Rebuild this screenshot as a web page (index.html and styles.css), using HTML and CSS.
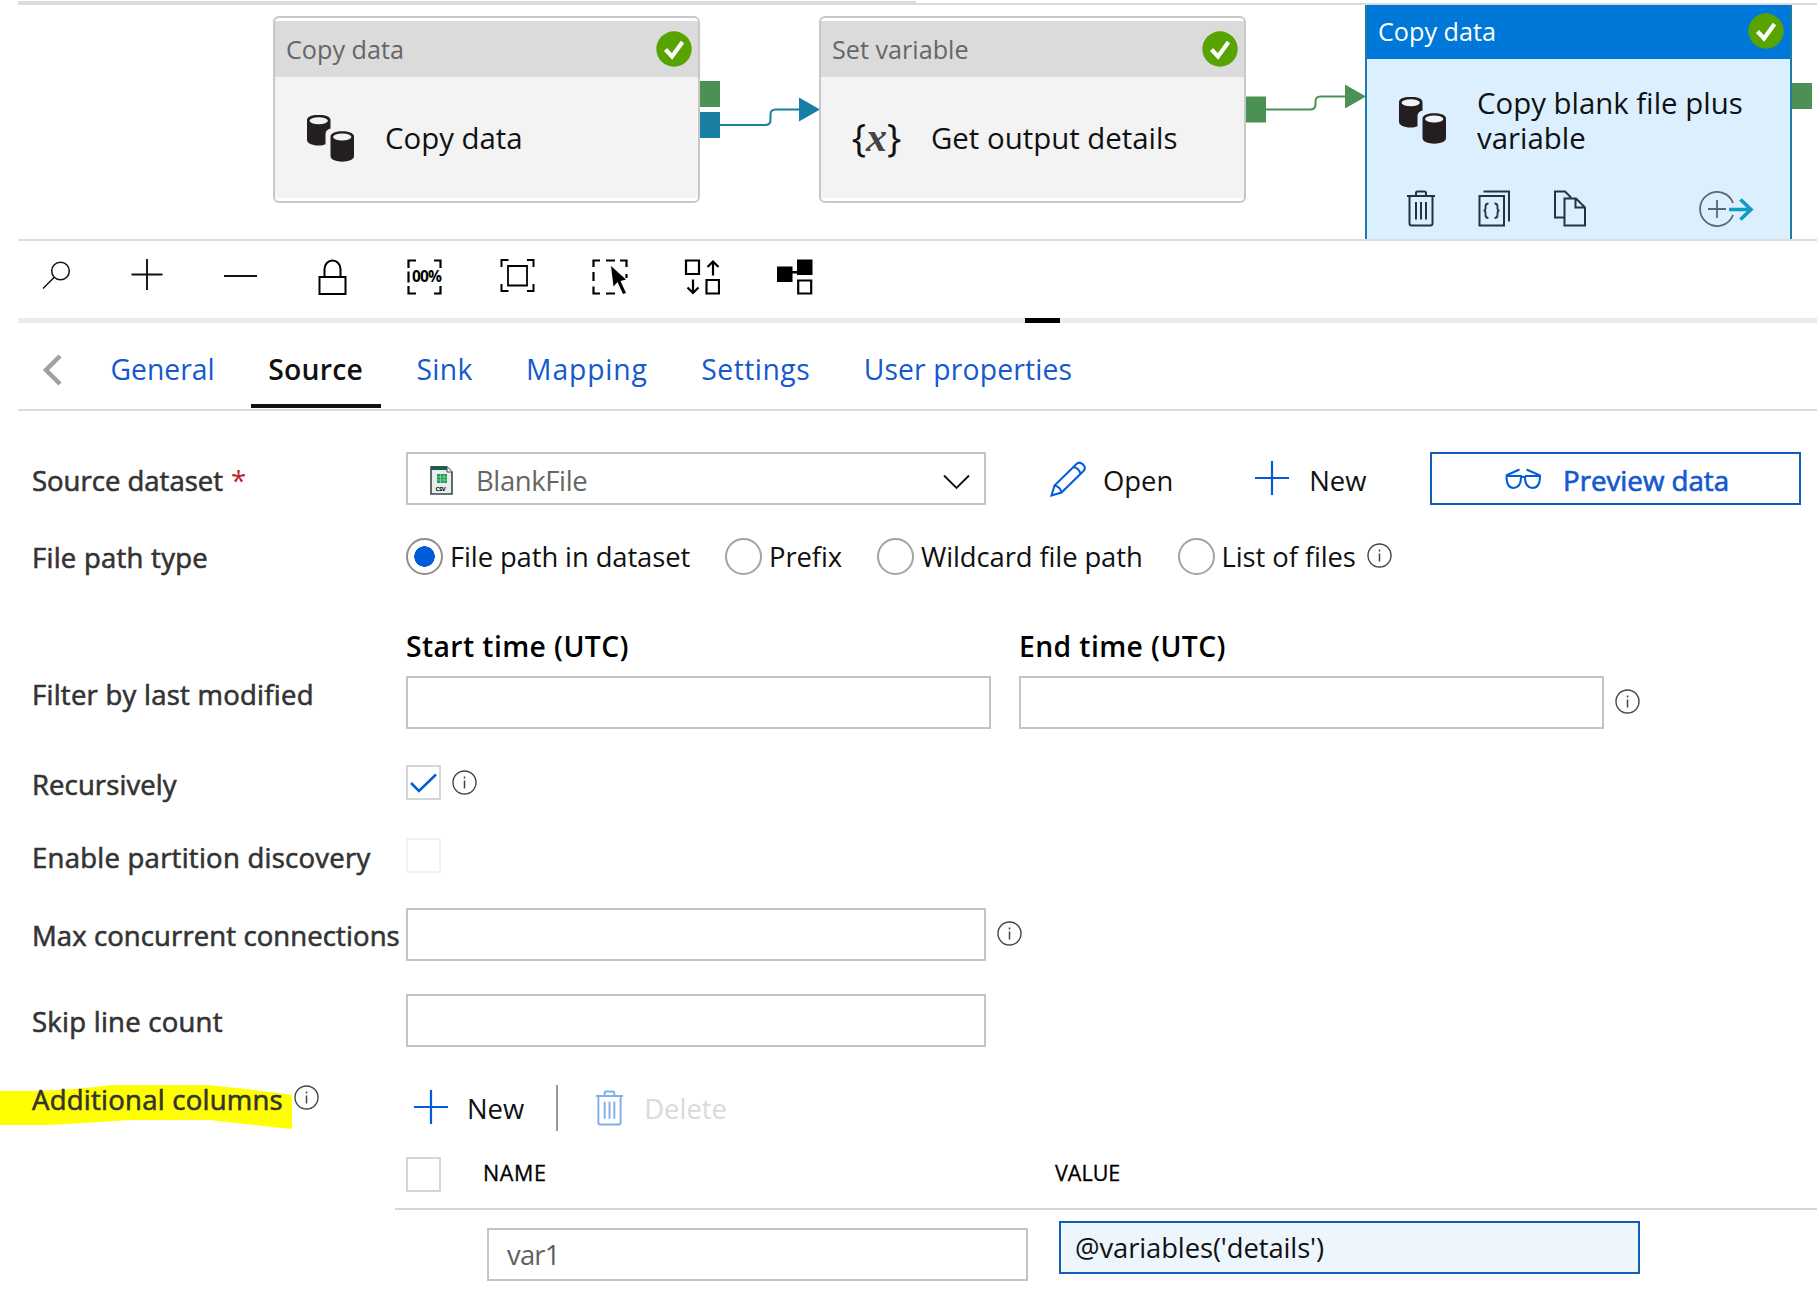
FILE: index.html
```html
<!DOCTYPE html>
<html lang="en">
<head>
    <meta charset="UTF-8">
    <meta name="viewport" content="width=device-width, initial-scale=1.0">
    <title>Pipeline - Copy blank file plus variable</title>
    <link rel="stylesheet" href="styles.css">
</head>
<body>
    <svg class="symbols" aria-hidden="true">
        <symbol id="check" viewBox="0 0 36 36">
            <circle cx="18" cy="18" r="17.7" fill="#57a300"/>
            <path d="M9.500 18.500l6.500 7L26.500 11" fill="none" stroke="#fff" stroke-width="4.200"/>
        </symbol>
        <symbol id="cylinders" viewBox="0 0 47 47">
            <path d="M0 5v20c0 3 5 5.500 11.500 5.500 3 0 5-.4 7-1.200V19c0-3 2-4.500 5-5.500V5c0-7-23.500-7-23.500 0z" fill="#231f20"/>
            <ellipse cx="11.700" cy="5.800" rx="9.200" ry="3.500" fill="#f3f3f3"/>
            <path d="M23.500 21.500v19.500c0 7.500 23.500 7.500 23.500 0V21.500c0-7-23.500-7-23.500 0z" fill="#231f20"/>
            <ellipse cx="35.200" cy="22" rx="9.200" ry="3.500" fill="#f3f3f3"/>
        </symbol>
        <symbol id="trash" viewBox="0 0 30 37">
            <path d="M1 6h28M10 5.500V3q0-1.500 1.500-1.500h7Q20 1.500 20 3v2.500M3.500 6v27.500q0 2 2 2h19q2 0 2-2V6M10 12v17.500M15 12v17.500M20 12v17.500" fill="none" stroke="currentColor" stroke-width="2"/>
        </symbol>
        <symbol id="info" viewBox="0 0 25 25">
            <circle cx="12.500" cy="12.500" r="11.500" fill="none" stroke="#444" stroke-width="1.400"/>
            <path d="M12.500 10.500v8M12.500 6.500v2" stroke="#444" stroke-width="1.500"/>
        </symbol>
        <symbol id="plus" viewBox="0 0 34 34">
            <path d="M17 0v34M0 17h34" stroke="#015cda" stroke-width="2.200"/>
        </symbol>
    </svg>

    <div class="canvas">
        <div class="canvas-scroll"></div>
        <svg class="links" width="1817" height="240">
            <path d="M720 125h45q5.500 0 5.500-5v-5.500q0-5 5-5H800" fill="none" stroke="#1b7fa3" stroke-width="2"/>
            <path d="M799 97.500l21 12-21 12z" fill="#1b7fa3"/>
            <path d="M1266 109.500h44q5.500 0 5.500-5v-3q0-5 5-5H1346" fill="none" stroke="#4a9153" stroke-width="2"/>
            <path d="M1345 84.500l21 12-21 12z" fill="#4a9153"/>
            <path d="M700 81h20v26h-20zM1246 96.500h20v26h-20zM1792 83h20v26h-20z" fill="#4a9153"/>
            <path d="M700 112h20v26h-20z" fill="#1b7fa3"/>
        </svg>

        <div class="node node-copy">
            <div class="node-head"><span>Copy data</span><svg class="status"><use href="#check"/></svg></div>
            <div class="node-body">
                <svg class="node-icon"><use href="#cylinders"/></svg>
                <span class="node-title">Copy data</span>
            </div>
        </div>

        <div class="node node-variable">
            <div class="node-head"><span>Set variable</span><svg class="status"><use href="#check"/></svg></div>
            <div class="node-body">
                <span class="node-icon var-icon">{<i>x</i>}</span>
                <span class="node-title">Get output details</span>
            </div>
        </div>

        <div class="node node-selected">
            <div class="node-head"><span>Copy data</span><svg class="status"><use href="#check"/></svg></div>
            <div class="node-body">
                <svg class="node-icon"><use href="#cylinders"/></svg>
                <span class="node-title">Copy blank file plus variable</span>
            </div>
            <div class="node-actions">
                <svg width="30" height="37"><use href="#trash"/></svg>
                <svg width="33" height="37" viewBox="0 0 33 37" fill="none" stroke="currentColor" stroke-width="2">
                    <path d="M1.500 6h24.500v29.500H1.500zM5.500 1.500h25.500V31.500"/>
                    <path d="M10.500 13.500q-3 0-3 3v2q0 2.200-2 2.200 2 0 2 2.200v2q0 3 3 3M16.500 13.500q3 0 3 3v2q0 2.200 2 2.200-2 0-2 2.200v2q0 3-3 3" stroke-width="1.800"/>
                </svg>
                <svg width="34" height="37" viewBox="0 0 34 37" fill="none" stroke="currentColor" stroke-width="2">
                    <path d="M11.500 27.500H2v-26h10l6 6M11.500 8.500h11.500l9 9v18H11.500zM22.500 8.500V17.500H32"/>
                </svg>
                <svg class="add-output" width="55" height="38" viewBox="0 0 55 38" fill="none">
                    <path d="M34 13A17 17 0 1 0 34 25M18 10v18M9 19h18" stroke="#5a6672" stroke-width="1.800"/>
                    <path d="M30 19.500H52M41.500 9.500l10.500 10-10.500 10" stroke="#0f9bc4" stroke-width="3.600"/>
                </svg>
            </div>
        </div>
    </div>

    <div class="toolbar">
        <svg viewBox="0 0 36 36" fill="none" stroke="#111" stroke-width="1.500"><circle cx="22.500" cy="12" r="8.800"/><path d="M16 18.500L5 29.500"/></svg>
        <svg viewBox="0 0 36 36" stroke="#111" stroke-width="1.900"><path d="M17 0v31M1.500 15.500h31"/></svg>
        <svg viewBox="0 0 36 36" stroke="#111" stroke-width="1.900"><path d="M2 17h33"/></svg>
        <svg viewBox="0 0 36 36" fill="none" stroke="#000" stroke-width="2"><path d="M4.500 18h26v17H4.500zM9.500 18V10a8 8.500 0 0 1 16 0v8"/></svg>
        <svg viewBox="0 0 36 36"><path d="M9 1.500H1.500V9M27 1.500h6.500V9M9 34.500H1.500V27M27 34.500h6.500V27M1.500 12.500v11" fill="none" stroke="#000" stroke-width="2.200"/><text x="5" y="23" textLength="30" class="zoom-text">00%</text></svg>
        <svg viewBox="0 0 36 36" fill="none" stroke="#000"><path d="M9.500 1H2.500v7M28 1h6.500v7M9.500 32H2.500v-7M28 32h6.500v-7" stroke-width="2"/><path d="M9 7h19v19.500H9z" stroke-width="1.800"/></svg>
        <svg viewBox="0 0 36 36"><path d="M8 1.500H1.500V8M14 1.500h9M28 1.500h6.500V8M1.500 13v9M1.500 27.500V34.500H8M14 34.500h9M34.500 15v4" fill="none" stroke="#000" stroke-width="2.200"/><path d="M19 7l15 13.500-5.500 1.500 5.500 12-3 1-5.500-12-4 4.500z"/></svg>
        <svg viewBox="0 0 36 36" fill="none" stroke="#000" stroke-width="2.200"><path d="M2 1.500h13V15H2zM22.500 21h12.500v13.500H22.500zM29 16.500V3M23.500 8l5.500-5.500L34.500 8M9 20.500V34M3.500 28.500L9 34l5.500-5.500"/></svg>
        <svg viewBox="0 0 36 36"><path d="M0 7.500h15.500V23H0zM20 .5h15.500V16H20zM15 12h6v2.500h-6z"/><path d="M21.200 21.500h13v13h-13z" fill="none" stroke="#000" stroke-width="2.200"/></svg>
    </div>
    <div class="splitter"><div class="handle"></div></div>

    <div class="tabs">
        <svg class="back" width="20" height="32" viewBox="0 0 20 32"><path d="M18 2L4 16l14 14" fill="none" stroke="#a0a0a0" stroke-width="4.500"/></svg>
        <div class="tab">General</div>
        <div class="tab active">Source</div>
        <div class="tab tab-sink">Sink</div>
        <div class="tab tab-mapping">Mapping</div>
        <div class="tab tab-settings">Settings</div>
        <div class="tab tab-user">User properties</div>
    </div>

    <div class="form">
        <div class="row row-dataset">
            <div class="label">Source dataset <span class="required">*</span></div>
            <div class="box select">
                <svg width="23" height="29" viewBox="0 0 23 29">
                    <path d="M1 1h16l5 5v22H1z" fill="#e9ecec" stroke="#3b4650" stroke-width="1.600"/>
                    <path d="M1 0h16v4H1z" fill="#1e5c48"/>
                    <path d="M17 1v5h5" fill="#fff" stroke="#3b4650"/>
                    <path d="M7 8h10v9H7z" fill="#1f9a50"/>
                    <path d="M7 11h10M7 14h10M10.500 8v9M14 8v9" stroke="#9fd8b4" stroke-width=".7"/>
                    <text x="5.500" y="25" class="csv-text">CSV</text>
                </svg>
                <span>BlankFile</span>
                <svg class="chevron" width="27" height="16" viewBox="0 0 27 16"><path d="M1 1.500l12.500 12.500L26 1.500" fill="none" stroke="#111" stroke-width="1.900"/></svg>
            </div>
            <div class="action open">
                <svg width="36" height="36" viewBox="0 0 36 36" fill="none" stroke="#015cda" stroke-width="2"><path d="M1.500 34.500l3-10L26.500 3q3-3 6.500.5t.5 6.500L11.500 31.500zM4.500 24.500q5.500 1 7 7M23.500 6q5.500 1 7 7"/></svg>
                <span>Open</span>
            </div>
            <div class="action new">
                <svg width="34" height="34"><use href="#plus"/></svg>
                <span>New</span>
            </div>
            <div class="preview">
                <svg width="36" height="22" viewBox="0 0 36 22" fill="none" stroke="#015cda" stroke-width="2"><path d="M1 8h15q.5 11.500-7.500 12Q1.500 20 1.500 8M20 8h15q0 12-7.500 12Q19.500 19.500 20 8M16 9.500q2-1.500 4 0M1 7.500L14.500 1.500M35 7.500L21.500 1.500"/></svg>
                <span>Preview data</span>
            </div>
        </div>

        <div class="row row-path">
            <div class="label">File path type</div>
            <div class="radio checked"><i></i><span>File path in dataset</span></div>
            <div class="radio"><i></i><span>Prefix</span></div>
            <div class="radio"><i></i><span>Wildcard file path</span></div>
            <div class="radio"><i></i><span>List of files</span></div>
            <svg class="info"><use href="#info"/></svg>
        </div>

        <div class="row row-filter">
            <div class="label">Filter by last modified</div>
            <div class="time"><b>Start time (UTC)</b><div class="box"></div></div>
            <div class="time"><b>End time (UTC)</b><div class="box"></div></div>
            <svg class="info"><use href="#info"/></svg>
        </div>

        <div class="row row-recursive">
            <div class="label">Recursively</div>
            <div class="checkbox"><svg width="27" height="20" viewBox="0 0 27 20"><path d="M1 10l8 8L26 1.500" fill="none" stroke="#015cda" stroke-width="2.500"/></svg></div>
            <svg class="info"><use href="#info"/></svg>
        </div>

        <div class="row row-partition">
            <div class="label">Enable partition discovery</div>
            <div class="checkbox disabled"></div>
        </div>

        <div class="row row-max">
            <div class="label">Max concurrent connections</div>
            <div class="box wide"></div>
            <svg class="info"><use href="#info"/></svg>
        </div>

        <div class="row row-skip">
            <div class="label">Skip line count</div>
            <div class="box wide"></div>
        </div>

        <div class="row row-columns">
            <svg class="marker" width="293" height="50" viewBox="0 0 293 50"><path d="M0 6h35Q75 5 112 0h96q40 4 84 10v34q-50-5-82-9h-80q-60 4-82 5H0z" fill="#ff0"/></svg>
            <div class="label">Additional columns<svg class="info"><use href="#info"/></svg></div>
            <div class="action add">
                <svg width="34" height="34"><use href="#plus"/></svg>
                <span>New</span>
            </div>
            <div class="action delete">
                <svg width="29" height="36"><use href="#trash"/></svg>
                <span>Delete</span>
            </div>
        </div>

        <div class="table">
            <div class="table-head">
                <div class="checkbox"></div>
                <div class="col-name">NAME</div>
                <div class="col-value">VALUE</div>
            </div>
            <div class="table-row">
                <div class="box name-box">var1</div>
                <div class="box value-box">@variables('details')</div>
            </div>
        </div>
    </div>
</body>
</html>
```
FILE: styles.css
```css
* {
    box-sizing: border-box;
}
body {
    margin: 0;
    width: 1817px;
    height: 1292px;
    overflow: hidden;
    background: #fff;
    color: #111;
    font-family: 'Open Sans', 'Noto Sans', sans-serif;
    font-size: 28.3px;
    line-height: 38px;
    white-space: nowrap;
}
svg {
    display: block;
    flex: none;
}
.symbols {
    position: absolute;
    width: 0;
    height: 0;
}

/* pipeline canvas */
.canvas {
    position: relative;
    height: 241px;
    margin-left: 18px;
    overflow: hidden;
    border-bottom: 2px solid #dcdcdc;
}
.canvas::before {
    content: "";
    display: block;
    height: 3px;
    border-bottom: 2px solid #dcdcdc;
}
.canvas-scroll {
    position: absolute;
    left: 0;
    top: 1px;
    width: 898px;
    height: 4px;
    background: #dcdcdc;
}
.links {
    position: absolute;
    left: -18px;
    top: 0;
}
.node {
    position: absolute;
    top: 16px;
    width: 427px;
    height: 187px;
    padding: 3px 0;
    background: #fff;
    border: 2px solid #c8c8c8;
    border-radius: 6px;
}
.node-copy {
    left: 255px;
}
.node-variable {
    left: 801px;
}
.node-selected {
    left: 1347px;
    top: 5px;
    height: 240px;
    padding: 0;
    background: #dbeffe;
    border: 2px solid #1b7fa3;
    border-width: 0 2px;
    border-radius: 0;
}
.node-head {
    display: flex;
    align-items: center;
    justify-content: space-between;
    height: 56px;
    padding: 0 6px 0 11px;
    background: #dbdbdb;
    color: #666;
    font-size: 25.2px;
}
.node-selected .node-head {
    height: 54px;
    padding-bottom: 2px;
    background: #0078d9;
    color: #fff;
}
.status {
    width: 36px;
    height: 36px;
}
.node-body {
    display: flex;
    align-items: center;
    height: 121px;
    padding: 2px 0 0 32px;
    background: #f3f3f3;
}
.node-selected .node-body {
    height: 122px;
    padding-top: 1px;
    background: none;
}
.node-icon {
    width: 47px;
    height: 47px;
}
.var-icon {
    display: flex;
    align-items: center;
    justify-content: center;
    padding-bottom: 3px;
    font-size: 38px;
}
.var-icon i {
    font-family: 'Liberation Serif', serif;
    font-weight: bold;
    font-size: 42px;
    color: #444;
}
.node-title {
    margin-left: 31px;
    font-size: 29.4px;
    line-height: 35px;
    white-space: normal;
}
.node-selected .node-title {
    padding-top: 1px;
}
.node-actions {
    display: flex;
    align-items: center;
    height: 56px;
    padding: 0 0 1px 39px;
    color: #26333d;
}
.node-actions svg {
    margin-right: 42px;
}
.node-actions .add-output {
    margin: 0 0 0 70px;
}

/* canvas toolbar */
.toolbar {
    display: flex;
    align-items: center;
    gap: 56.4px;
    height: 77px;
    padding-left: 37.5px;
    padding-bottom: 6px;
}
.toolbar svg {
    width: 36px;
    height: 36px;
}
.zoom-text {
    font-size: 15.5px;
    font-weight: bold;
}
.splitter {
    height: 5px;
    margin-left: 18px;
    background: #ebebeb;
}
.handle {
    width: 35px;
    height: 5px;
    margin-left: 1007px;
    background: #000;
}

/* activity tabs */
.tabs {
    display: flex;
    height: 88px;
    margin-left: 18px;
    padding-left: 23px;
    border-bottom: 2px solid #dcdcdc;
    color: #1559cf;
}
.back {
    margin: 31px 32px 0 1px;
}
.tab {
    height: 85px;
    margin-right: 18.5px;
    padding: 27px 17.5px 0;
}
.back + .tab {
    margin-left: -1px;
}
.tab.active {
    border-bottom: 4px solid #111;
    color: #111;
    font-weight: 600;
    letter-spacing: .25px;
}
.tab-sink {
    letter-spacing: .3px;
}
.tab-mapping {
    letter-spacing: .85px;
}
.tab-settings {
    letter-spacing: .5px;
}
.tab-user {
    letter-spacing: .15px;
}

/* source settings */
.form {
    padding: 41px 0 0 32px;
}
.row {
    display: flex;
    align-items: center;
    margin-bottom: 32px;
}
.label {
    display: flex;
    flex: none;
    width: 374px;
    padding-top: 4px;
    color: #333;
    font-size: 27.5px;
    letter-spacing: .25px;
    -webkit-text-stroke: .6px #333;
}
.required {
    margin-left: 8px;
    color: #b5262b;
    -webkit-text-stroke: 0;
}
.box {
    display: flex;
    align-items: center;
    flex: none;
    width: 585px;
    height: 53px;
    border: 2px solid #c4c4c4;
    background: #fff;
}
.box.wide, .select {
    width: 580px;
}
.info {
    width: 25px;
    height: 25px;
    margin-left: 11px;
}
.row-dataset {
    height: 53px;
}
.row-dataset .label {
    letter-spacing: 0;
}
.select {
    padding: 3px 14px 0 22px;
    color: #666;
    font-size: 27.5px;
    letter-spacing: -.4px;
}
.select span {
    margin-left: 23px;
    padding-top: 1px;
}
.csv-text {
    font-size: 6px;
    font-weight: bold;
}
.chevron {
    margin: 3px 0 0 auto;
}
.action {
    display: flex;
    align-items: center;
    font-size: 27.4px;
}
.row-dataset .action span {
    padding-top: 4px;
}
.open {
    margin-left: 64px;
}
.open span {
    margin-left: 17px;
}
.new {
    margin: -2px 0 0 82px;
}
.row-dataset .new span {
    margin-left: 20px;
    padding-top: 6px;
}
.preview {
    display: flex;
    align-items: center;
    gap: 22px;
    width: 371px;
    height: 53px;
    margin: 0 16px 0 auto;
    padding-left: 73px;
    border: 2px solid #0f5cba;
    color: #1559cf;
    font-size: 27.7px;
    -webkit-text-stroke: .7px #1559cf;
}
.preview span {
    padding-top: 2px;
}
.row-path {
    height: 38px;
    margin-bottom: 52px;
}
.radio {
    display: flex;
    align-items: center;
    margin-right: 35px;
    font-size: 27.4px;
    letter-spacing: -.1px;
}
.radio span {
    padding-top: 2px;
}
.radio i {
    width: 37px;
    height: 37px;
    margin-right: 7px;
    border: 2px solid #a3a3a3;
    border-radius: 50%;
}
.radio.checked i {
    border-color: #8f8f8f;
    background: radial-gradient(circle, #015cda 10px, #fff 10.5px);
}
.row-path .info {
    margin: -2px 0 0 -24px;
}
.row-filter {
    align-items: flex-start;
    height: 102px;
    margin-bottom: 36px;
}
.row-filter .label {
    margin-top: 45px;
}
.time {
    margin-right: 28px;
}
.time b {
    display: block;
    margin-bottom: 11px;
    color: #000;
    font-weight: 600;
    letter-spacing: .4px;
}
.row-filter .info {
    margin: 62px 0 0 -17px;
}
.row-recursive {
    height: 35px;
    margin-bottom: 38px;
}
.row-recursive .label {
    letter-spacing: .1px;
}
.checkbox {
    display: flex;
    align-items: center;
    justify-content: center;
    flex: none;
    width: 35px;
    height: 35px;
    border: 2px solid #d6d6d6;
}
.checkbox.disabled {
    border-color: #f2f2f2;
}
.row-partition {
    height: 35px;
    margin-bottom: 35px;
}
.row-max {
    height: 53px;
    margin-bottom: 33px;
}
.row-max .label {
    padding-top: 2px;
    letter-spacing: .1px;
}
.row-max .info {
    margin-top: -2px;
}
.row-skip {
    height: 53px;
    margin-bottom: 38px;
}
.row-skip .label {
    padding-top: 2px;
}
.row-columns {
    position: relative;
    height: 46px;
    margin-bottom: 26px;
}
.row-columns .label {
    position: relative;
    margin-top: -21px;
}
.row-columns .info {
    margin-top: 4px;
}
/* highlighter stroke behind the label */
.marker {
    position: absolute;
    left: -32px;
    top: 0;
}
.add {
    height: 46px;
    margin-left: 8px;
    padding-right: 32px;
    border-right: 2px solid #999;
}
.add svg {
    margin-bottom: 3px;
}
.add span {
    margin-left: 19px;
    padding-top: 2px;
}
.delete {
    margin-left: 37px;
    color: #dadada;
}
.delete svg {
    margin-bottom: 1px;
    color: #82aeee;
}
.delete span {
    margin-left: 20px;
    padding-top: 2px;
}
.table {
    margin-left: 363px;
}
.table-head {
    display: flex;
    height: 53px;
    padding-left: 11px;
    border-bottom: 2px solid #d6d6d6;
    color: #000;
    font-size: 21.5px;
    line-height: 32px;
    -webkit-text-stroke: .3px #000;
}
.col-name {
    width: 572px;
    margin-left: 42px;
    letter-spacing: .6px;
}
.table-row {
    display: flex;
    padding: 11px 0 0 92px;
    font-size: 27.4px;
}
.name-box {
    width: 541px;
    margin-top: 7px;
    padding: 1px 0 0 18px;
    color: #606060;
    letter-spacing: -.8px;
}
.value-box {
    width: 581px;
    margin-left: 31px;
    padding: 1px 0 0 14px;
    border-color: #0f5cba;
    background: #edf5fd;
    letter-spacing: -.1px;
}
```
